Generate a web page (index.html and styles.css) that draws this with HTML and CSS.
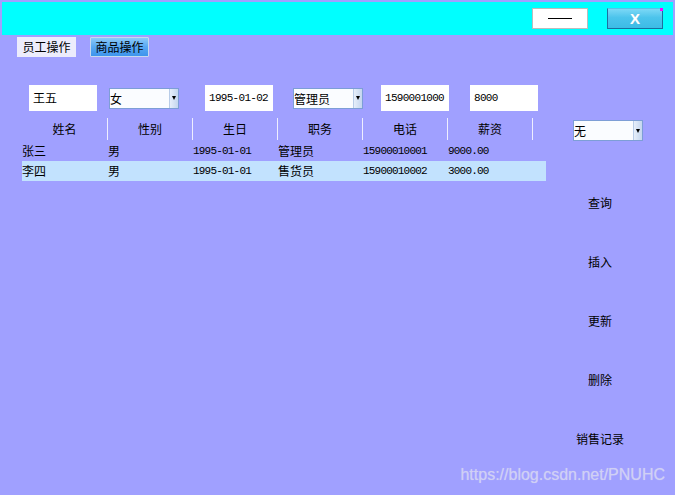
FILE: index.html
```html
<!DOCTYPE html>
<html lang="zh-CN">
<head>
<meta charset="utf-8">
<title>员工操作</title>
<link rel="stylesheet" href="styles.css">
</head>
<body>
<div class="window">
  <div class="titlebar">
    <button class="btn-min" type="button"><span class="dash"></span></button>
    <button class="btn-close" type="button">X</button>
  </div>

  <div class="tabs">
    <div class="tab tab-plain">员工操作</div>
    <div class="tab tab-active">商品操作</div>
  </div>

  <div class="form">
    <div class="field f1">王五</div>
    <div class="combo f2"><span class="combo-text">女</span><span class="combo-btn"><i class="tri"></i></span></div>
    <div class="field num f3">1995-01-02</div>
    <div class="combo f4"><span class="combo-text">管理员</span><span class="combo-btn"><i class="tri"></i></span></div>
    <div class="field num f5">1590001000</div>
    <div class="field num f6">8000</div>
  </div>

  <div class="main">
    <div class="grid">
      <div class="thead">
        <div class="th">姓名</div>
        <div class="th">性别</div>
        <div class="th">生日</div>
        <div class="th">职务</div>
        <div class="th">电话</div>
        <div class="th">薪资</div>
      </div>
      <div class="row">
        <div class="td">张三</div>
        <div class="td">男</div>
        <div class="td mono">1995-01-01</div>
        <div class="td">管理员</div>
        <div class="td mono">15900010001</div>
        <div class="td mono">9000.00</div>
      </div>
      <div class="row sel">
        <div class="td">李四</div>
        <div class="td">男</div>
        <div class="td mono">1995-01-01</div>
        <div class="td">售货员</div>
        <div class="td mono">15900010002</div>
        <div class="td mono">3000.00</div>
      </div>
    </div>

    <div class="side">
      <div class="combo side-combo"><span class="combo-text">无</span><span class="combo-btn"><i class="tri"></i></span></div>
      <div class="actions">
        <button class="act" type="button">查询</button>
        <button class="act" type="button">插入</button>
        <button class="act" type="button">更新</button>
        <button class="act" type="button">删除</button>
        <button class="act" type="button">销售记录</button>
      </div>
    </div>
  </div>

  <div class="watermark">https://blog.csdn.net/PNUHC</div>
</div>
</body>
</html>
```

FILE: styles.css
```css
* { box-sizing: border-box; }

html, body {
  margin: 0;
  padding: 0;
  width: 675px;
  height: 495px;
  overflow: hidden;
  background: #a0a0ff;
  font-family: "Noto Sans CJK SC", "Liberation Sans", sans-serif;
  font-size: 12px;
  color: #000;
}

.window {
  position: relative;
  width: 675px;
  height: 495px;
  padding-top: 2px;
}

/* title bar */
.titlebar {
  margin: 0 2px 0 2px;
  height: 33px;
  background: #00ffff;
  display: flex;
  align-items: center;
  justify-content: flex-end;
  padding-right: 10px;
  padding-bottom: 1px;
}

.btn-min {
  width: 56px;
  height: 21px;
  margin: 0;
  padding: 0;
  background: #ffffff;
  border: 1px solid #bcbcbc;
  display: flex;
  align-items: center;
  justify-content: center;
}

.dash {
  display: block;
  width: 24px;
  height: 1px;
  background: #000;
}

.btn-close {
  position: relative;
  width: 56px;
  height: 21px;
  margin: 0 0 0 19px;
  padding: 0;
  border: 1px solid #1c6f9e;
  border-top-color: #56c4ec;
  background: linear-gradient(#7cd8f6, #4cc4ec 45%, #3cbce6);
  color: #ffffff;
  font-family: "Liberation Sans", sans-serif;
  font-weight: bold;
  font-size: 15px;
  line-height: 19px;
  text-align: center;
  text-shadow: 0 0 1px #7fb8d8;
}

.btn-close::after {
  content: "";
  position: absolute;
  top: -1px;
  right: -1px;
  width: 3px;
  height: 3px;
  background: #ff00ff;
}

/* tabs */
.tabs {
  display: flex;
  gap: 14px;
  margin-top: 2px;
  padding-left: 17px;
  height: 20px;
}

.tab {
  width: 59px;
  height: 20px;
  line-height: 19px;
  text-align: center;
  font-size: 12px;
}

.tab-plain {
  background: #ececfc;
}

.tab-active {
  background: linear-gradient(#8ccaf8, #56a8f2 50%, #3e94ec);
  border: 1px solid #c8d8ee;
  border-radius: 1px;
  line-height: 17px;
}

/* form row */
.form {
  display: flex;
  align-items: center;
  margin-top: 28px;
  height: 26px;
}

.field {
  width: 68px;
  height: 26px;
  background: #ffffff;
  padding-left: 4px;
  line-height: 26px;
  font-size: 12px;
  white-space: nowrap;
}

.field.num {
  font-family: "Liberation Mono", monospace;
  font-size: 11px;
  letter-spacing: -0.7px;
}

.f1 { margin-left: 29px; }
.f2 { margin-left: 12px; }
.f3 { margin-left: 26px; }
.f4 { margin-left: 20px; }
.f5 { margin-left: 18px; }
.f6 { margin-left: 21px; }

.combo {
  width: 70px;
  height: 21px;
  display: flex;
  border: 1px solid #7d9ed6;
  background: #fafcff;
}

.combo-text {
  flex: 1;
  line-height: 19px;
  font-size: 12px;
  padding-left: 0;
  white-space: nowrap;
  overflow: hidden;
}

.combo-btn {
  width: 9px;
  display: flex;
  align-items: center;
  justify-content: center;
  background: linear-gradient(90deg, #e6eefa, #c4d6ee);
  border-left: 1px solid #b8cce8;
}

.tri {
  display: block;
  width: 0;
  height: 0;
  border-left: 2px solid transparent;
  border-right: 2px solid transparent;
  border-top: 4px solid #000;
}

/* main area */
.main {
  display: flex;
  margin-top: 7px;
}

.grid {
  margin-left: 22px;
  width: 524px;
}

.thead {
  display: flex;
  height: 23px;
}

.th {
  width: 85px;
  height: 22px;
  line-height: 21px;
  text-align: center;
  border-right: 1px solid #eeeeff;
  font-size: 12px;
}

.th:first-child {
  width: 86px;
}

.row {
  display: flex;
  height: 20px;
  line-height: 20px;
}

.row.sel {
  background: #c2e2fe;
}

.td {
  width: 85px;
  font-size: 12px;
  white-space: nowrap;
}

.td:first-child {
  width: 86px;
}

.td.mono {
  font-family: "Liberation Mono", monospace;
  font-size: 11px;
  letter-spacing: -0.8px;
}

/* side panel */
.side {
  margin-left: 16px;
  width: 76px;
  display: flex;
  flex-direction: column;
}

.side-combo {
  margin-left: 11px;
  margin-top: 2px;
}

.actions {
  margin-top: 50px;
  display: flex;
  flex-direction: column;
  gap: 35px;
}

.act {
  height: 24px;
  margin: 0;
  padding: 0;
  border: 0;
  background: transparent;
  font-family: "Noto Sans CJK SC", "Liberation Sans", sans-serif;
  font-size: 12px;
  color: #000;
  text-align: center;
  line-height: 24px;
}

.watermark {
  position: absolute;
  right: 10px;
  top: 466px;
  font-family: "Liberation Sans", Arial, sans-serif;
  font-size: 16px;
  color: #d0d0f4;
  text-shadow: 0 0 1px rgba(255,255,255,0.35);
  white-space: nowrap;
}
```
